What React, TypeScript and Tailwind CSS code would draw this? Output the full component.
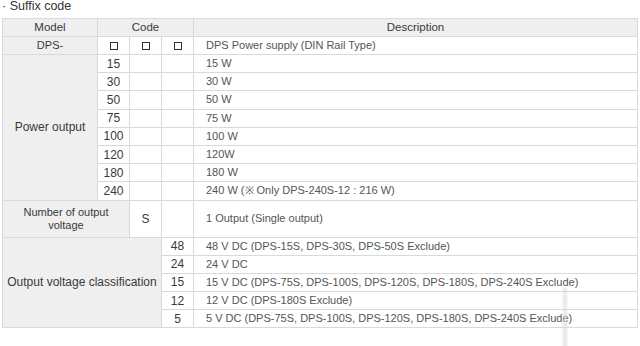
const font = { fontFamily: '"Liberation Sans", Arial, sans-serif' };

const powers = [
  ["15", "15 W"],
  ["30", "30 W"],
  ["50", "50 W"],
  ["75", "75 W"],
  ["100", "100 W"],
  ["120", "120W"],
  ["180", "180 W"],
  ["240", "240 W (※ Only DPS-240S-12 : 216 W)"],
];

const volts = [
  ["48", "48 V DC (DPS-15S, DPS-30S, DPS-50S Exclude)"],
  ["24", "24 V DC"],
  ["15", "15 V DC (DPS-75S, DPS-100S, DPS-120S, DPS-180S, DPS-240S Exclude)"],
  ["12", "12 V DC (DPS-180S Exclude)"],
  ["5", "5 V DC (DPS-75S, DPS-100S, DPS-120S, DPS-180S, DPS-240S Exclude)"],
];

const gray = "border border-[#d9d9d9] bg-[#efefef] text-center text-[#3a3a3a]";
const num = "border border-[#d9d9d9] bg-white text-center text-[12px] text-[#3a3a3a]";
const desc = "border border-[#d9d9d9] bg-white pl-3 text-left text-[#555] whitespace-nowrap";

function Box() {
  return <span className="inline-block h-[8px] w-[8px] border border-[#333] align-middle" />;
}

export default function App() {
  return (
    <div className="relative h-[346px] w-[640px] overflow-hidden bg-white" style={font}>
      <div className="h-[18px] pl-[2px] text-[12.5px] leading-[13px] text-[#333]">· Suffix code</div>
      <table className="ml-[2px] w-[636px] table-fixed border-collapse text-[11px] leading-none">
        <colgroup>
          <col className="w-[95px]" />
          <col className="w-[32px]" />
          <col className="w-[32px]" />
          <col className="w-[32px]" />
          <col />
        </colgroup>
        <tbody>
          <tr className="h-[18px]">
            <td className={gray + " text-[11.5px]"}>Model</td>
            <td className={gray + " text-[11.5px]"} colSpan={3}>Code</td>
            <td className={gray + " text-[11.5px]"}>Description</td>
          </tr>
          <tr className="h-[18px]">
            <td className={gray}>DPS-</td>
            <td className={num}><Box /></td>
            <td className={num}><Box /></td>
            <td className={num}><Box /></td>
            <td className={desc}>DPS Power supply (DIN Rail Type)</td>
          </tr>
          {powers.map(([n, d], i) => (
            <tr key={n} className="h-[18.2px]">
              {i === 0 && (
                <td className={gray + " text-[12px]"} rowSpan={8}>Power output</td>
              )}
              <td className={num}>{n}</td>
              <td className={num}></td>
              <td className={num}></td>
              <td className={desc}>{d}</td>
            </tr>
          ))}
          <tr className="h-[37px]">
            <td className={gray + " leading-[13px]"} colSpan={2}>Number of output<br />voltage</td>
            <td className={num}>S</td>
            <td className={num}></td>
            <td className={desc}>1 Output (Single output)</td>
          </tr>
          {volts.map(([n, d], i) => (
            <tr key={n} className="h-[18.2px]">
              {i === 0 && (
                <td className={gray + " text-[12px]"} colSpan={3} rowSpan={5}>Output voltage classification</td>
              )}
              <td className={num}>{n}</td>
              <td className={desc}>{d}</td>
            </tr>
          ))}
        </tbody>
      </table>
      <div className="pointer-events-none absolute left-[561px] top-[288px] h-[58px] w-[8px] bg-gradient-to-r from-transparent via-[#d6d6d6] to-transparent opacity-60" />
    </div>
  );
}
